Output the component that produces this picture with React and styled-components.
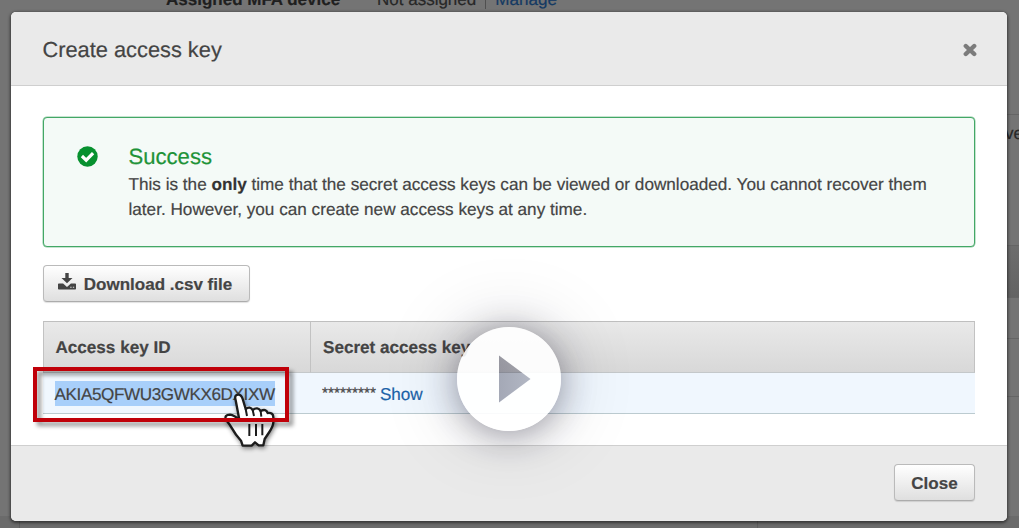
import React from "react";
import styled, { createGlobalStyle } from "styled-components";

const GlobalStyle = createGlobalStyle`
  * { box-sizing: border-box; }
  html, body { margin: 0; padding: 0; }
  body {
    font-family: "Liberation Sans", Arial, sans-serif;
    font-size: 17.1px;
    color: #444;
    text-rendering: geometricPrecision;
    -webkit-text-stroke: 0.2px currentColor;
    overflow: hidden;
  }
`;

const Screen = styled.div`
  position: relative;
  width: 1019px;
  height: 528px;
  overflow: hidden;
  background: #747474;
`;

const Backdrop = styled.div`
  display: flex;
  flex-direction: column;
  height: 528px;
`;

const DeviceRow = styled.div`
  display: flex;
  align-items: baseline;
  height: 20px;
  margin-top: -10px;
  padding-left: 166px;
  font-size: 17px;
  line-height: 20px;
  color: #272727;
  white-space: nowrap;
`;

const DeviceLabel = styled.b`
  width: 211px;
  color: #1f1f1f;
`;

const DeviceDivider = styled.span`
  align-self: center;
  width: 1px;
  height: 17px;
  margin: 0 9px 0 9px;
  background: #505050;
`;

const DeviceLink = styled.span`
  font-size: 17.1px;
  color: #143a63;
`;

const SideColumn = styled.div`
  display: flex;
  flex-direction: column;
  align-self: flex-end;
  width: 13px;
  padding-top: 104px;
`;

const SideCell = styled.div`
  height: ${(p) => p.$h}px;
  border-top: 1px solid #656565;
  background: ${(p) => p.$bg || "transparent"};
  color: #272727;
  line-height: 38px;
  text-indent: -1px;
  white-space: nowrap;
  overflow: hidden;
`;

const BottomStrip = styled.div`
  display: flex;
  height: 12px;
  padding-left: 19px;
  background: #6b6b6b;
`;

const StripCell = styled.div`
  width: ${(p) => p.$w}px;
  border-left: 1px solid #5e5e5e;
`;

const Modal = styled.section`
  position: absolute;
  left: 11px;
  top: 12px;
  display: flex;
  flex-direction: column;
  width: 996px;
  height: 509px;
  border-radius: 5px;
  background: #fff;
  box-shadow: 0 1px 3px 1px rgba(0, 0, 0, 0.5);
`;

const ModalHeader = styled.header`
  display: flex;
  align-items: center;
  justify-content: space-between;
  height: 74px;
  padding: 2px 30px 0 31.5px;
  border-bottom: 1px solid #cfcfcf;
  border-radius: 5px 5px 0 0;
  background: #eaeaea;
`;

const Title = styled.h1`
  margin: 0;
  font-size: 21.8px;
  line-height: 28px;
  font-weight: 400;
  color: #444;
`;

const ModalBody = styled.div`
  display: flex;
  flex-direction: column;
  align-items: flex-start;
  height: 359px;
  padding: 31px 31px 0 32px;
`;

const Alert = styled.div`
  display: flex;
  width: 932px;
  height: 130px;
  padding: 25px 0 0 33px;
  border: 1px solid #43a766;
  border-radius: 4px;
  background: #f4faf7;
  box-shadow: 0 0 0 0.5px rgba(67, 167, 102, 0.6);
`;

const AlertIcon = styled.svg`
  flex: none;
  width: 21px;
  height: 21px;
  margin: 3px 31px 0 -0.5px;
`;

const AlertText = styled.div`
  white-space: nowrap;
  font-size: 17.16px;
  color: #444;

  b { color: #333; }
`;

const AlertTitle = styled.h2`
  margin: 0;
  font-size: 22.1px;
  line-height: 27px;
  font-weight: 400;
  color: #1e9338;
`;

const AlertMessage = styled.p`
  margin: 2px 0 0;
  line-height: 25px;
`;

const Button = styled.button`
  display: flex;
  align-items: center;
  justify-content: center;
  gap: 8px;
  width: ${(p) => p.$w}px;
  height: 37px;
  margin: ${(p) => p.$m || 0};
  padding: 2px ${(p) => p.$pr || 0}px 0 0;
  border: 1px solid #bababa;
  border-bottom-color: #acacac;
  border-radius: 4px;
  background: linear-gradient(#fff, #dfdfdf);
  box-shadow: 0 1px 1px rgba(0, 0, 0, 0.12);
  font: bold 17px/20px "Liberation Sans", Arial, sans-serif;
  color: #444;
`;

const DownloadIcon = styled.svg`
  width: 18px;
  height: 17px;
  margin-top: -7px;
`;

const Table = styled.div`
  display: grid;
  grid-template-columns: 267px 1fr;
  width: 932px;
`;

const HeadCell = styled.div`
  height: 52px;
  padding-left: ${(p) => (p.$last ? 12 : 11.5)}px;
  border-top: 1px solid #bfbfbf;
  border-bottom: 1px solid #c4c8ca;
  border-left: 1px solid #c2c2c2;
  border-right: ${(p) => (p.$last ? "1px solid #c2c2c2" : "0")};
  background: linear-gradient(#e9e9e9, #d8d8d8);
  line-height: 51px;
  font-weight: 700;
`;

const Cell = styled.div`
  position: relative;
  display: flex;
  align-items: center;
  gap: 4px;
  height: 41px;
  padding: 1px 0 0 ${(p) => p.$pl || 12}px;
  border-bottom: 1px solid #bccbd0;
  background: #f0f7fe;
`;

const Selected = styled.span`
  height: 25px;
  background: #a8cffa;
  font-size: 17.1px;
  letter-spacing: -0.39px;
  line-height: 27px;
  color: #444;
`;

const Stars = styled.span`
  padding-top: 1px;
  font-size: 15.4px;
  line-height: 26px;
`;

const Link = styled.span`
  line-height: 27px;
  padding-top: 1px;
  color: #1b62a8;
`;

const Highlight = styled.div`
  position: absolute;
  left: -10px;
  top: -6px;
  width: 256px;
  height: 55px;
  border: 4px solid #c00009;
  filter: drop-shadow(4px 4px 2px rgba(0, 0, 0, 0.42));
  z-index: 3;
`;

const HandCursor = styled.svg`
  position: absolute;
  left: 167px;
  top: 7px;
  width: 80px;
  height: 80px;
  filter: drop-shadow(1px 2px 2px rgba(0, 0, 0, 0.45));
  z-index: 2;
`;

const ModalFooter = styled.footer`
  display: flex;
  align-items: flex-start;
  justify-content: flex-end;
  height: 76px;
  padding: 18px 32px 0 0;
  border-top: 1px solid #cfcfcf;
  border-radius: 0 0 5px 5px;
  background: #eaeaea;
`;

const PlayButton = styled.div`
  position: absolute;
  left: 457px;
  top: 327px;
  width: 104px;
  height: 104px;
  border-radius: 50%;
  box-shadow: 0 0 80px rgba(30, 28, 45, 0.18), 0 4px 34px rgba(30, 28, 50, 0.4);

  svg { display: block; }
`;

export default function App() {
  return (
    <Screen>
      <GlobalStyle />
      <Backdrop>
        <DeviceRow>
          <DeviceLabel>Assigned MFA device</DeviceLabel>
          <span>Not assigned</span>
          <DeviceDivider />
          <DeviceLink>Manage</DeviceLink>
        </DeviceRow>
        <SideColumn>
          <SideCell $h={131}>ve</SideCell>
          <SideCell $h={52} $bg="linear-gradient(#6d6d6d, #636363)" />
          <SideCell $h={41} />
          <SideCell $h={58} />
          <SideCell $h={120} />
        </SideColumn>
        <BottomStrip>
          <StripCell $w={738} />
          <StripCell $w={237} />
        </BottomStrip>
      </Backdrop>

      <Modal>
        <ModalHeader>
          <Title>Create access key</Title>
          <svg width="14" height="14" viewBox="0 0 14 14">
            <path d="M2.800 3l8.400 8M11.200 3l-8.400 8" stroke="#7c7c7c" strokeWidth="4.400" strokeLinecap="round" />
          </svg>
        </ModalHeader>
        <ModalBody>
          <Alert>
            <AlertIcon viewBox="0 0 21 21">
              <circle cx="10.5" cy="10.5" r="10.2" fill="#07912f" />
              <path d="M4.900 10l4.300 4.200 6.900-7" fill="none" stroke="#fff" strokeWidth="3.200" />
            </AlertIcon>
            <AlertText>
              <AlertTitle>Success</AlertTitle>
              <AlertMessage>
                This is the <b>only</b> time that the secret access keys can be viewed or downloaded. You cannot recover them
                <br />
                later. However, you can create new access keys at any time.
              </AlertMessage>
            </AlertText>
          </Alert>
          <Button $w={207} $pr={3} $m="18px 0 19px">
            <DownloadIcon viewBox="0 0 18 17" fill="#444">
              <path d="M7.300 0h3.400v5h3.800L9 10.300 3.500 5h3.800z" />
              <path d="M.8 10.500h4.300L9 14l3.900-3.500h4.300q.8 0 .8.800v4.400q0 .8-.8.8H.8q-.8 0-.8-.8v-4.400q0-.8.8-.8z" />
              <path d="M12.200 14.300h1.400M14.800 14.300h1.400" stroke="#ddd" strokeWidth="1.100" />
            </DownloadIcon>
            Download .csv file
          </Button>
          <Table>
            <HeadCell>Access key ID</HeadCell>
            <HeadCell $last>Secret access key</HeadCell>
            <Cell $pl={11.5}>
              <Selected>AKIA5QFWU3GWKX6DXIXW</Selected>
              <HandCursor viewBox="0 0 240 240">
                <path
                  d="M77 61Q72 44 85 44Q94 44 98 57L107 87Q120 77 128 90Q143 79 152 93Q168 85 173 99Q190 97 190 112V127Q190 138 178 156L164 177L160 196H146L135 187L125 197H98L93 182Q75 162 66 145Q60 134 48 119Q42 104 60 104Q73 106 88 119Z"
                  fill="#fff"
                  stroke="#1c1c1c"
                  strokeWidth="7"
                  strokeLinejoin="round"
                />
                <path
                  d="M107 87L111 108M128 90L132 108M152 93L154 110M118 132V168M138 132V168M157 132V166"
                  fill="none"
                  stroke="#1c1c1c"
                  strokeWidth="6"
                />
              </HandCursor>
              <Highlight />
            </Cell>
            <Cell>
              <Stars>*********</Stars>
              <Link>Show</Link>
            </Cell>
          </Table>
        </ModalBody>
        <ModalFooter>
          <Button $w={81}>Close</Button>
        </ModalFooter>
      </Modal>

      <PlayButton>
        <svg width="104" height="104" viewBox="0 0 104 104">
          <defs>
            <linearGradient id="playShade" x1="0" y1="0" x2="1" y2="0">
              <stop offset="0" stopColor="#23233c" stopOpacity="0.37" />
              <stop offset="1" stopColor="#23233c" stopOpacity="0.3" />
            </linearGradient>
          </defs>
          <path
            fillRule="evenodd"
            d="M52 0a52 52 0 1 0 0 104a52 52 0 1 0 0-104zM42 28.500V75.500L73.500 52z"
            fill="#fff"
            fillOpacity="0.9"
          />
          <path d="M42 28.500V75.500L73.500 52z" fill="url(#playShade)" />
        </svg>
      </PlayButton>
    </Screen>
  );
}
